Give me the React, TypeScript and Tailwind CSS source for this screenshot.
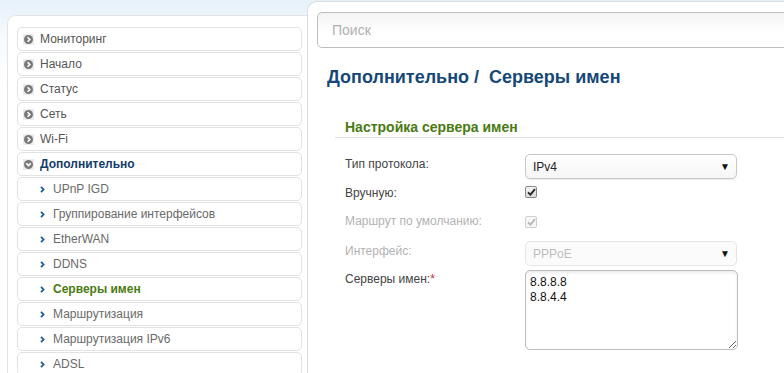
import React from "react";

const font = { fontFamily: '"Liberation Sans", Arial, sans-serif' };

function TopIcon({ open }: { open?: boolean }) {
  return (
    <span className="w-[11px] h-[11px] bg-[#ececec] flex items-center justify-center mr-[6px]">
      <svg width="9" height="9" viewBox="0 0 9 9">
        <circle cx="4.5" cy="4.5" r="4.5" fill="#7a7a7a" />
        {open ? (
          <polyline points="2.3,3.4 4.5,5.6 6.7,3.4" fill="none" stroke="#fff" strokeWidth="1.6" />
        ) : (
          <polyline points="3.6,2.3 5.8,4.5 3.6,6.7" fill="none" stroke="#fff" strokeWidth="1.6" />
        )}
      </svg>
    </span>
  );
}

function SubIcon() {
  return (
    <svg width="5" height="7" viewBox="0 0 5 7" className="mr-[8px]">
      <polyline points="1,0.8 3.6,3.5 1,6.2" fill="none" stroke="#1d5c9c" strokeWidth="1.8" />
    </svg>
  );
}

type Item = { label: string; sub?: boolean; open?: boolean; active?: boolean };

const items: Item[] = [
  { label: "Мониторинг" },
  { label: "Начало" },
  { label: "Статус" },
  { label: "Сеть" },
  { label: "Wi-Fi" },
  { label: "Дополнительно", open: true },
  { label: "UPnP IGD", sub: true },
  { label: "Группирование интерфейсов", sub: true },
  { label: "EtherWAN", sub: true },
  { label: "DDNS", sub: true },
  { label: "Серверы имен", sub: true, active: true },
  { label: "Маршрутизация", sub: true },
  { label: "Маршрутизация IPv6", sub: true },
  { label: "ADSL", sub: true },
];

function Check({ disabled }: { disabled?: boolean }) {
  return (
    <span
      className={
        "w-[12px] h-[12px] rounded-[2px] border flex items-center justify-center " +
        (disabled
          ? "border-[#cfcfcf] bg-[#f6f6f6]"
          : "border-[#8a8a8a] bg-gradient-to-b from-[#f4f4f4] to-[#d9d9d9]")
      }
    >
      <svg width="9" height="8" viewBox="0 0 9 8">
        <path
          d="M1 4.4 L3.4 6.6 L8 1.2"
          fill="none"
          stroke={disabled ? "#b5b5b5" : "#222"}
          strokeWidth="1.8"
        />
      </svg>
    </span>
  );
}

function Select({ value, disabled }: { value: string; disabled?: boolean }) {
  return (
    <div
      className={
        "w-[212px] h-[25px] rounded-[5px] border flex items-center justify-between pl-[7px] pr-[6px] text-[12px] " +
        (disabled
          ? "border-[#e6e6e6] bg-[#fbfbfb] text-[#bdbdbd]"
          : "border-[#c8c8c8] bg-gradient-to-b from-white to-[#f6f6f6] text-[#222] shadow-[0_1px_1px_rgba(0,0,0,0.08)]")
      }
    >
      <span>{value}</span>
      <span className="text-[10px] text-[#111]">▼</span>
    </div>
  );
}

export default function App() {
  return (
    <div
      className="w-[784px] h-[373px] overflow-hidden flex bg-gradient-to-b from-[#e6f1fa] via-[#f6fafd] via-[40px] to-white to-[90px]"
      style={font}
    >
      {/* left column */}
      <div className="w-[307px] shrink-0 pl-[7px] pt-[15px]">
        <div className="h-[400px] bg-white border border-r-0 border-[#e4e4e4] rounded-tl-[9px] pt-[11px] pl-[9px] pr-[5px]">
          {items.map((it) => (
            <div
              key={it.label}
              className="h-[24px] mb-[1px] border border-[#e2e2e2] rounded-[5px] flex items-center text-[12px] pl-[5px]"
            >
              {it.sub ? (
                <span className="pl-[17px] flex items-center">
                  <SubIcon />
                  <span
                    className={
                      it.active ? "font-bold text-[#4a7a12]" : "text-[#6a6a6a]"
                    }
                  >
                    {it.label}
                  </span>
                </span>
              ) : (
                <span className="flex items-center">
                  <TopIcon open={it.open} />
                  <span className={it.open ? "font-bold text-[#123c6c]" : "text-[#555]"}>
                    {it.label}
                  </span>
                </span>
              )}
            </div>
          ))}
        </div>
      </div>

      {/* right panel */}
      <div className="flex-1 mt-[1px] bg-white border-l border-t border-[#dcdcdc] rounded-tl-[10px] pl-[9px] pt-[10px]">
        <div className="w-[500px] h-[36px] rounded-[5px] border border-[#bdbdbd] bg-gradient-to-b from-[#f3f3f3] to-white to-[60%] flex items-center pl-[14px] text-[14px] text-[#b0b0b0]">
          Поиск
        </div>
        <div className="mt-[17px] pl-[10px] text-[18px] leading-[24px] font-bold text-[#154878]">
          Дополнительно /&nbsp; Серверы имен
        </div>
        <div className="mt-[29px] ml-[18px] pl-[10px] pb-[1px] border-b border-[#e2e2e2] text-[14px] leading-[18px] font-bold text-[#4a7a12]">
          Настройка сервера имен
        </div>
        <div className="ml-[28px] mt-[16px] flex flex-col text-[12px] leading-[14px]">
          <div className="flex h-[25px] mb-[5px]">
            <div className="w-[180px] pt-[3px] text-[#444]">Тип протокола:</div>
            <Select value="IPv4" />
          </div>
          <div className="flex h-[16px] mb-[14px]">
            <div className="w-[180px] pt-[2px] text-[#444]">Вручную:</div>
            <div className="pt-[2px]">
              <Check />
            </div>
          </div>
          <div className="flex h-[16px] mb-[11px]">
            <div className="w-[180px] text-[#b3b3b3]">Маршрут по умолчанию:</div>
            <div className="pt-[2px]">
              <Check disabled />
            </div>
          </div>
          <div className="flex h-[24px] mb-[5px]">
            <div className="w-[180px] pt-[3px] text-[#b3b3b3]">Интерфейс:</div>
            <Select value="PPPoE" disabled />
          </div>
          <div className="flex">
            <div className="w-[180px] pt-[2px] text-[#444]">
              Серверы имен:<span className="text-[#d0312d]">*</span>
            </div>
            <textarea
              readOnly
              defaultValue={"8.8.8.8\n8.8.4.4"}
              className="w-[213px] h-[80px] rounded-[5px] border border-[#bdbdbd] shadow-[inset_0_2px_3px_rgba(0,0,0,0.08)] px-[4px] pt-[4px] text-[12px] leading-[15px] text-[#111] outline-none resize-y"
              style={font}
            />
          </div>
        </div>
      </div>
    </div>
  );
}
